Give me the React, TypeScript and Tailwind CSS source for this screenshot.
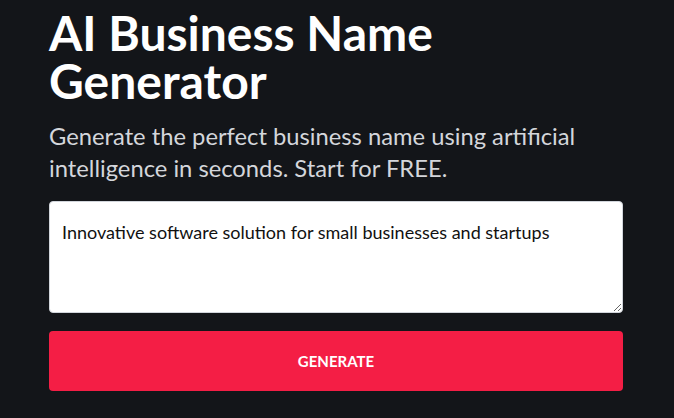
export default function App() {
  return (
    <div
      className="min-h-[418px] w-full bg-[#131519] px-[49px] pt-[9px]"
      style={{ fontFamily: "Lato, 'Noto Sans', sans-serif" }}
    >
      <h1 className="text-[48px] font-bold leading-[48px] text-white">
        AI Business Name
        <br />
        Generator
      </h1>
      <p className="mt-[15px] text-[23.75px] leading-[32px] text-[#d4d6db]">
        Generate the perfect business name using artificial
        <br />
        intelligence in seconds. Start for FREE.
      </p>
      <form className="mt-[17px] flex w-[574px] flex-col gap-[18px]">
        <textarea
          className="h-[112px] w-full resize-y rounded-[4px] border border-[#d1d5db] bg-white px-[12px] pt-[17px] pb-[15px] text-[18px] leading-[27px] text-[#111111] outline-none"
          defaultValue="Innovative software solution for small businesses and startups"
        />
        <button
          type="button"
          className="h-[60px] w-full rounded-[4px] bg-[#f41e45] text-[15px] font-bold uppercase text-white"
        >
          Generate
        </button>
      </form>
    </div>
  );
}
